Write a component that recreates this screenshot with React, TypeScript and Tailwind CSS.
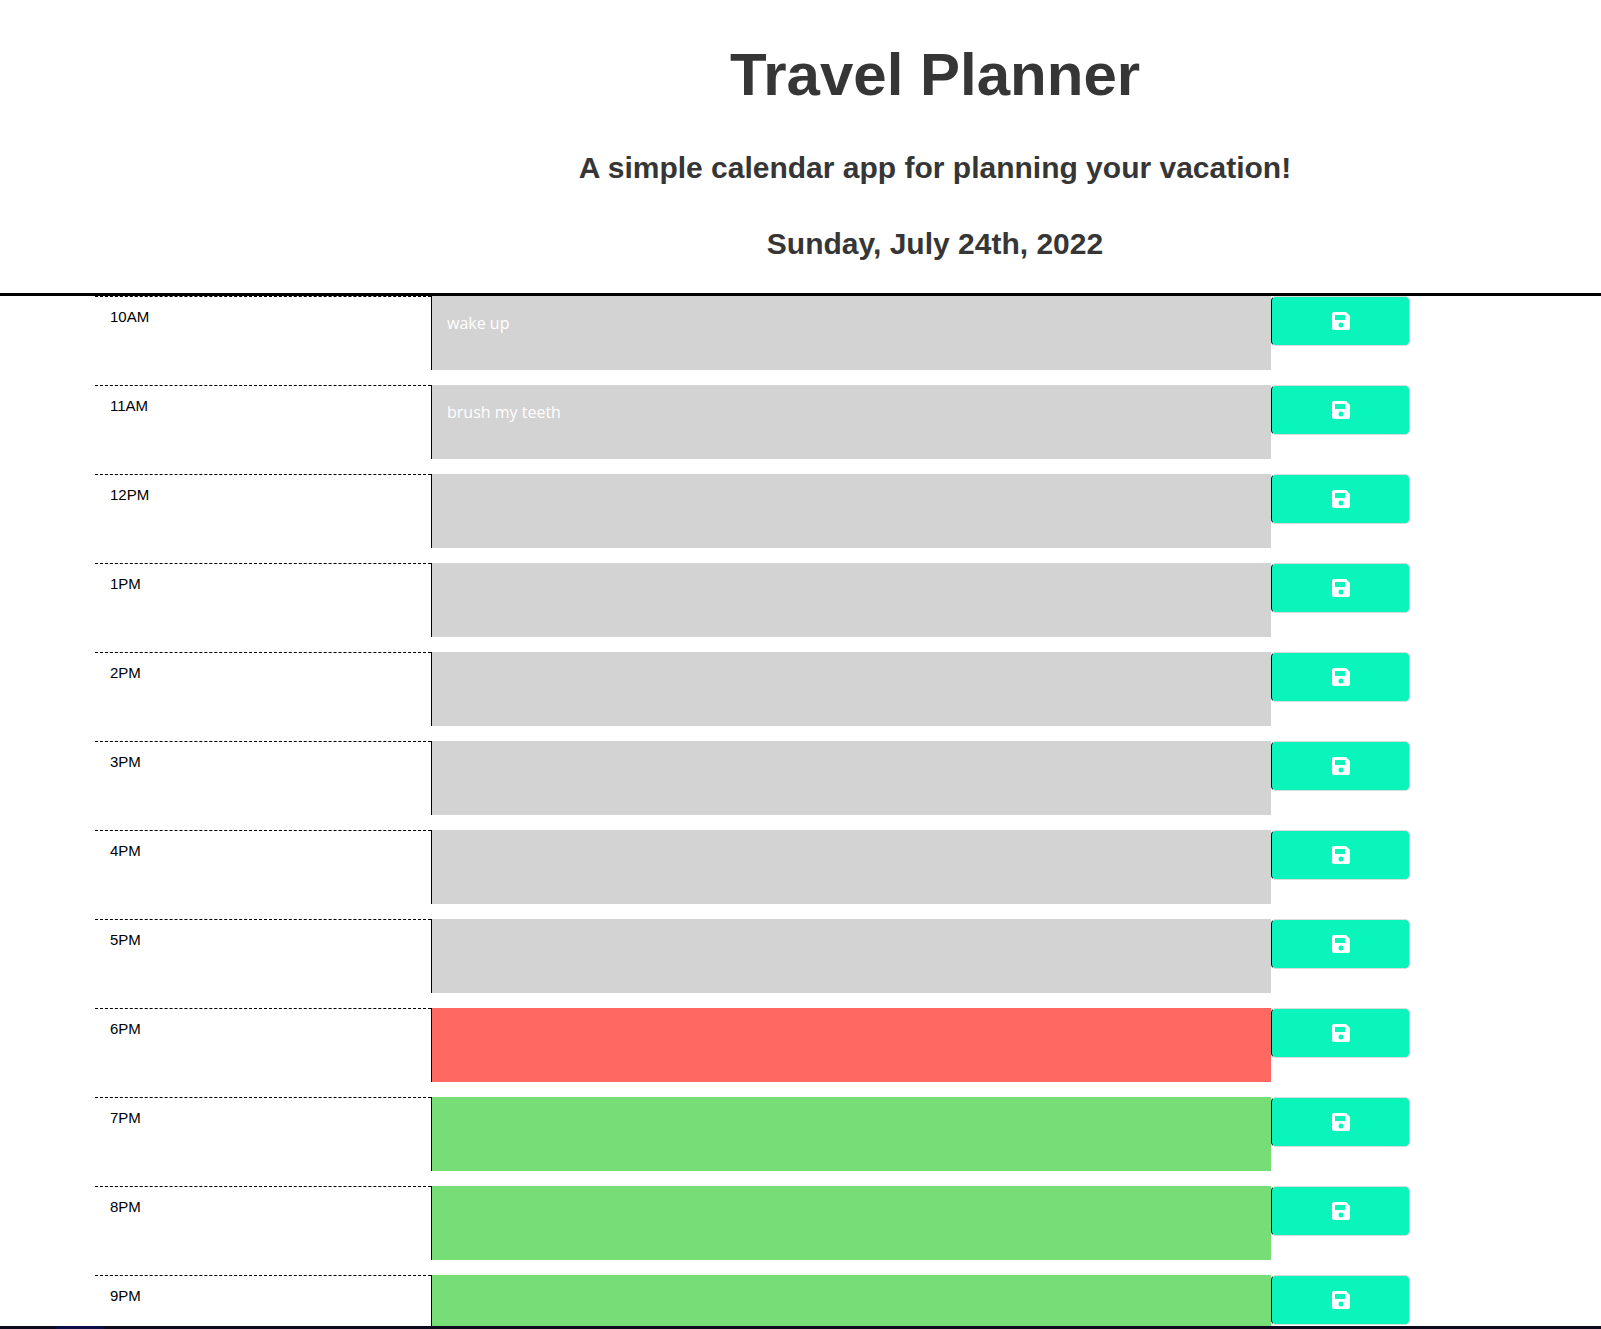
type Phase = 'past' | 'present' | 'future'

const phaseColor: Record<Phase, string> = {
  past: 'bg-[#d3d3d3]',
  present: 'bg-[#ff6961]',
  future: 'bg-[#77dd77]',
}

const slots: { hour: string; phase: Phase; plan?: string }[] = [
  { hour: '10AM', phase: 'past', plan: 'wake up' },
  { hour: '11AM', phase: 'past', plan: 'brush my teeth' },
  { hour: '12PM', phase: 'past' },
  { hour: '1PM', phase: 'past' },
  { hour: '2PM', phase: 'past' },
  { hour: '3PM', phase: 'past' },
  { hour: '4PM', phase: 'past' },
  { hour: '5PM', phase: 'past' },
  { hour: '6PM', phase: 'present' },
  { hour: '7PM', phase: 'future' },
  { hour: '8PM', phase: 'future' },
  { hour: '9PM', phase: 'future' },
]

function SaveIcon() {
  return (
    <svg viewBox="0 0 24 24" className="size-6 fill-white" aria-hidden="true">
      <path
        fillRule="evenodd"
        d="M5 3h12l4 4v12a2 2 0 0 1-2 2H5a2 2 0 0 1-2-2V5a2 2 0 0 1 2-2Zm1 3v5h10V6H6Zm6 7.500a2.500 2.500 0 1 0 0 5a2.500 2.500 0 1 0 0-5Z"
      />
    </svg>
  )
}

export default function App() {
  return (
    <div className="flex h-screen flex-col bg-white font-['Liberation_Sans',Arial,sans-serif]">
      <header className="flex flex-col items-center border-b-[3px] border-black pt-[41px] pb-[29px] pl-[269px] text-center font-bold text-[#363636]">
        <h1 className="text-[60px] leading-[68px]">Travel Planner</h1>
        <p className="mt-[39px] text-[30px] leading-10">A simple calendar app for planning your vacation!</p>
        <p className="mt-9 text-[30px] leading-10">Sunday, July 24th, 2022</p>
      </header>

      <main className="min-h-0 flex-1 overflow-hidden">
        <div className="ml-[95px] flex w-[84%] max-w-[1344px] flex-col gap-[15px]">
          {slots.map(({ hour, phase, plan }) => (
            <div key={hour} className="grid h-[74px] shrink-0 grid-cols-[2fr_5fr_1fr] items-start">
              <label
                htmlFor={`plan-${hour}`}
                className="h-full border-t border-dashed border-black px-[15px] pt-2 text-[15px] leading-6 text-black"
              >
                {hour}
              </label>
              <textarea
                id={`plan-${hour}`}
                defaultValue={plan}
                className={`block h-full w-full resize-none overflow-hidden border-l border-black px-[15px] pt-[15px] font-['Open_Sans',sans-serif] text-base leading-6 text-white outline-none ${phaseColor[phase]}`}
              />
              <button
                type="button"
                aria-label={`Save ${hour}`}
                className="flex h-[50px] w-[139px] items-center justify-center rounded-[5px] border border-[#dbdbdb] border-l-black bg-[#0af5bb]"
              >
                <SaveIcon />
              </button>
            </div>
          ))}
        </div>
      </main>

      <footer className="flex h-[3px] shrink-0 bg-[#0c0a1c]">
        <span className="ml-14 w-12 bg-[#0d0d4a]" />
      </footer>
    </div>
  )
}
